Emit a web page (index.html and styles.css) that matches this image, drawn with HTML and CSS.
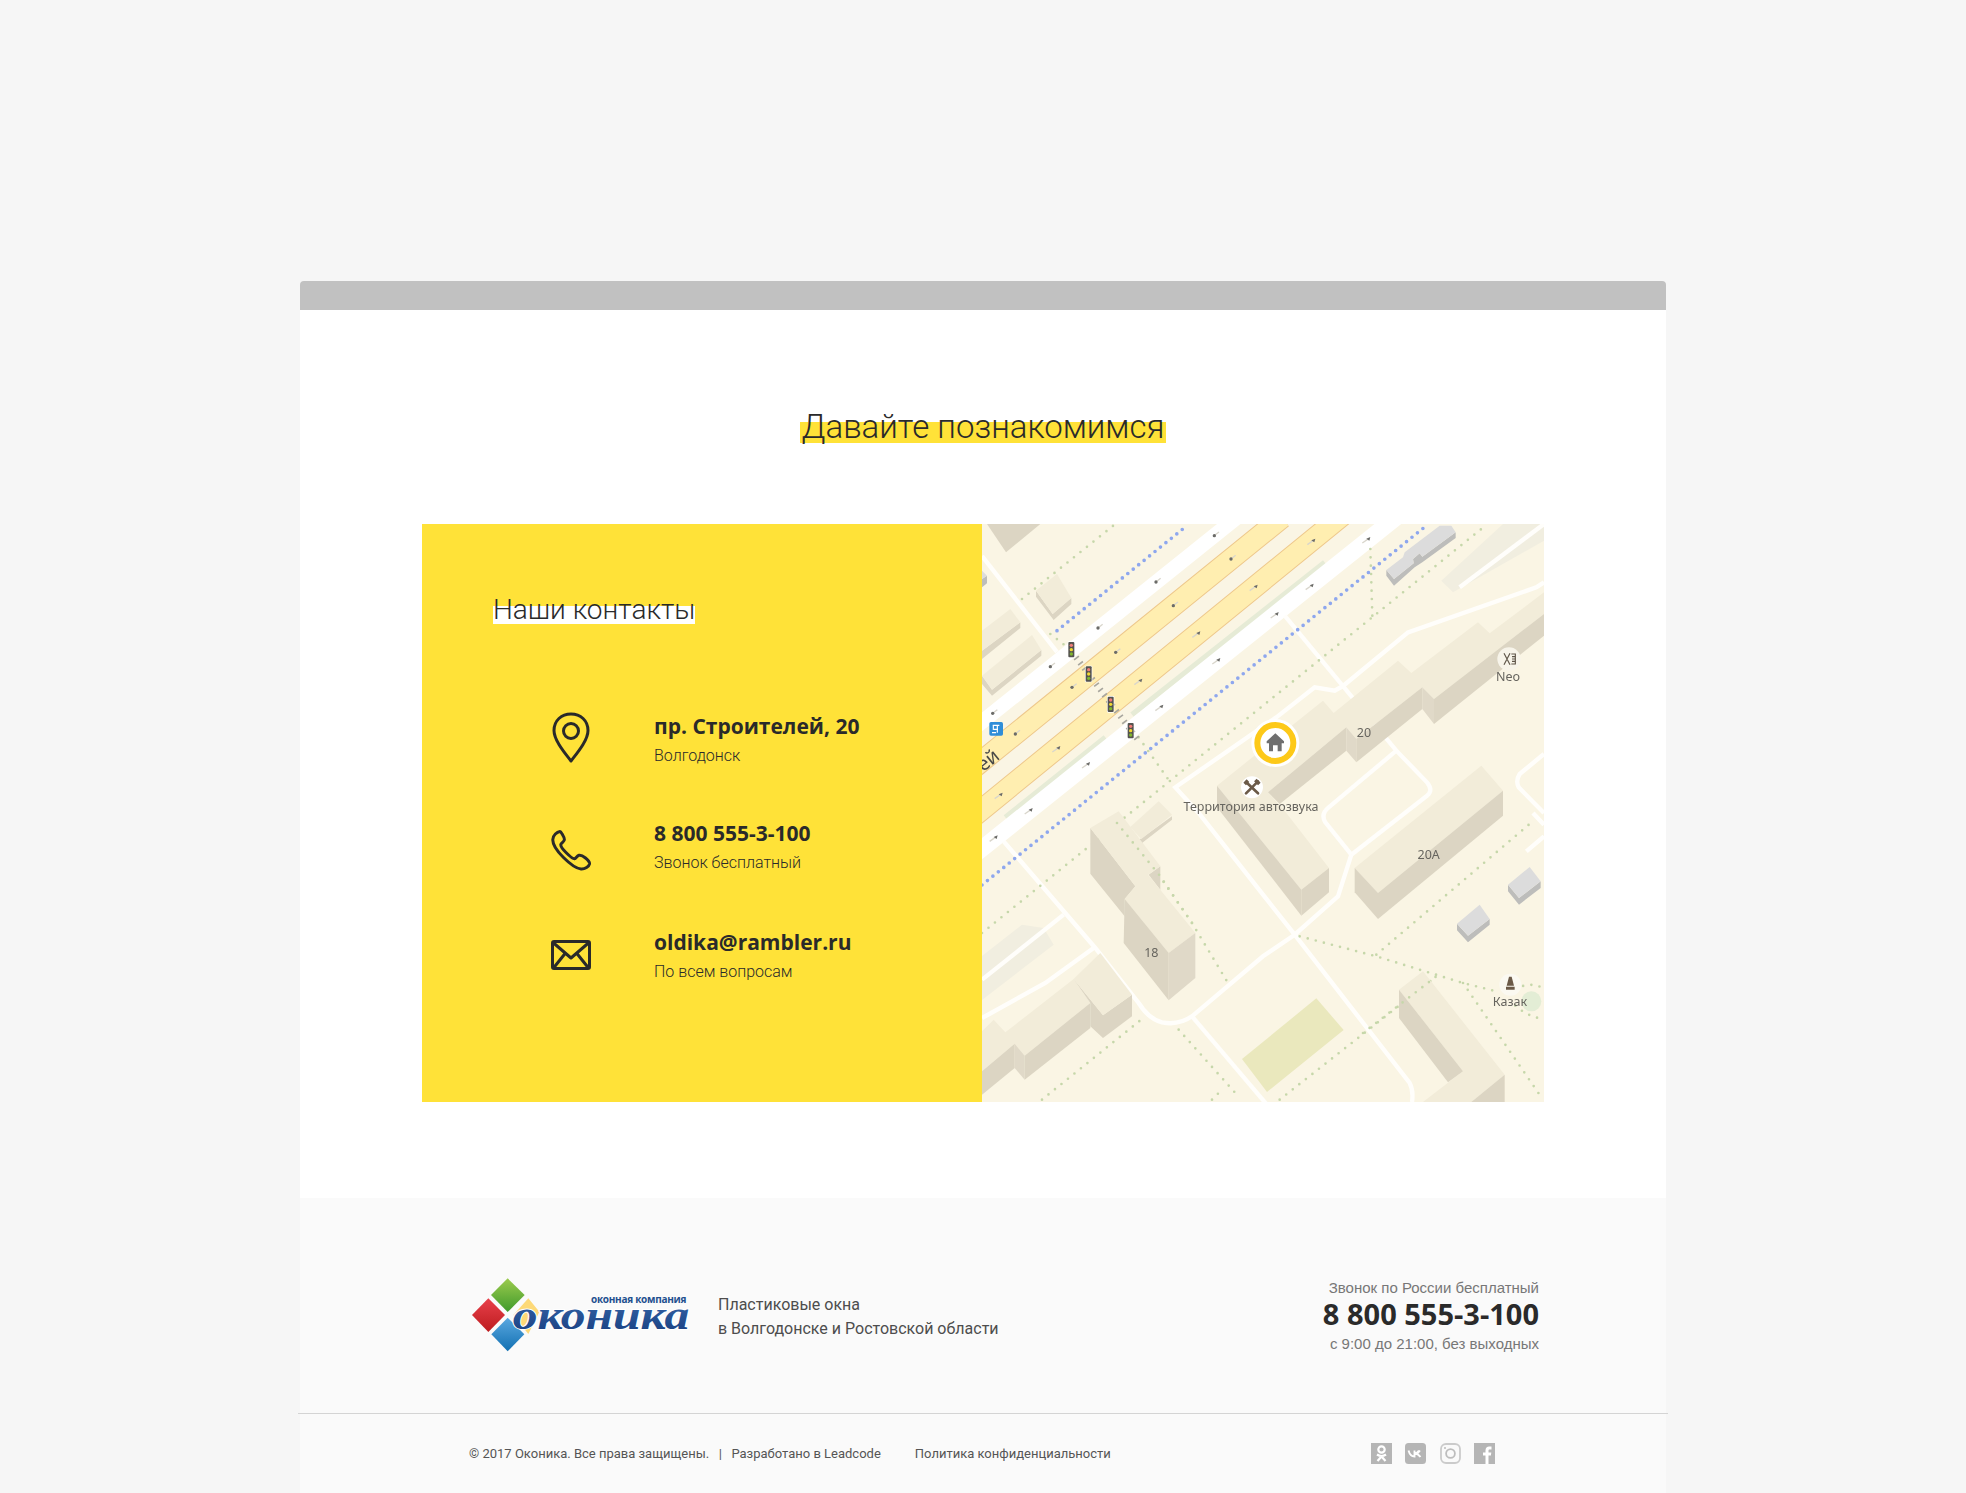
FILE: index.html
```html
<!DOCTYPE html>
<html lang="ru">
  <head>
    <meta charset="UTF-8" />
    <title>Оконика</title>
    <link rel="stylesheet" href="styles.css">
  </head>
  <body>
    <div class="window">
      <div class="window-bar"></div>
      <section class="contacts">
        <h2 class="title"><span>Давайте познакомимся</span></h2>
        <div class="panel">
          <div class="panel-info">
            <h3 class="panel-title"><span>Наши контакты</span></h3>
            <div class="item item-address">
              <div class="item-icon">
                <svg width="40" height="52" viewBox="0 0 40 52"><path class="line" d="M20 49C13 40 3 28 3 18.500C3 8.500 10.500 2 20 2s17 6.500 17 16.500C37 28 27 40 20 49Z"/><circle class="line" cx="20" cy="19" r="7.500"/></svg>
              </div>
              <div>
                <div class="item-name">пр. Строителей, 20</div>
                <div class="item-sub">Волгодонск</div>
              </div>
            </div>
            <div class="item item-phone">
              <div class="item-icon">
                <svg width="40" height="42" viewBox="0 0 40 42"><path class="line" d="M9 2.500C6 3 2 6 1.800 10.500C1.500 16 7 23 12.500 28.500C18 34 24 39.500 30 40C34 40.300 38 37.500 38.500 35C38.800 33 37 31 34.500 29C32 27 30 25.800 28 26.300C26 26.800 25 29.500 23.500 29.800C21.500 30 17.500 26 15 23.500C12.500 21 9.500 17.500 9.800 15.500C10 14 12.800 13 13.300 11C13.800 9 12 6.500 10.800 4.500C10.300 3.500 9.800 2.400 9 2.500Z"/></svg>
              </div>
              <div>
                <div class="item-name">8 800 555-3-100</div>
                <div class="item-sub">Звонок бесплатный</div>
              </div>
            </div>
            <div class="item item-mail">
              <div class="item-icon">
                <svg width="40" height="30" viewBox="0 0 40 30"><rect class="line" x="1.500" y="1.500" width="37" height="27" rx="1.500"/><path class="line" d="M2 2.500L20 18L38 2.500M2.500 28L14.500 13M37.500 28L25.500 13"/></svg>
              </div>
              <div>
                <div class="item-name">oldika@rambler.ru</div>
                <div class="item-sub">По всем вопросам</div>
              </div>
            </div>
          </div>
          <div class="panel-map">
            <svg class="map" width="562" height="578" viewBox="0 0 1686 1734">
              <defs>
                <g id="arr-left"><path d="M-3 2L14 -11" stroke="#d9d6cc" stroke-width="4"/><circle r="5" fill="#6b6b68"/></g>
                <g id="arr-right"><path d="M3 -2L-17 12" stroke="#d9d6cc" stroke-width="4"/><path d="M-5 -1L7 -6L4 5Z" fill="#6b6b68"/></g>
                <g id="light">
                  <rect x="-11" y="-25" width="22" height="50" rx="4" fill="#fff"/>
                  <rect x="-9" y="-23" width="18" height="46" rx="3" fill="#55534f"/>
                  <circle cy="-13" r="5" fill="#ef7d78"/><circle r="5" fill="#f0d832"/><circle cy="13" r="5" fill="#7fb52f"/>
                </g>
              </defs>

              <rect width="1686" height="1734" fill="#faf5e4"/>
              <polygon class="pale" points="1378,170 1413,205 1686,50 1686,0 1563,0"/>
              <polygon class="pale" points="0,1296 120,1202 185,1212 215,1262 0,1428"/>
              <polygon points="780,1605 1003,1423 1085,1518 855,1704" fill="#eae8bd"/>
              <circle cx="1648" cy="1432" r="30" fill="#e3edd5"/>

              <!-- main road -->
              <path class="road-white" stroke-width="44" d="M-100 674L850 -88"/>
              <path class="road-edge" d="M-100 792L900 -19M-100 938L1100 -41"/>
              <path class="road-yellow" d="M-100 792L900 -19M-100 938L1100 -41"/>
              <path class="road-green" d="M70 880L370 640M450 572L1028 115"/>
              <path class="road-white" stroke-width="50" d="M-100 1054L1300 -66"/>

              <!-- yards -->
              <path class="road" d="M0 96L225 384"/>
              <path class="road" d="M908 275L1243 680L1335 775Q1355 800 1335 815L1108 992"/>
              <path class="road" d="M1243 680L1040 850Q1015 870 1030 895L1108 992"/>
              <path class="road" d="M1083 486L1278 325L1663 190L1686 175"/>
              <path class="road" d="M1083 486L1058 500L998 490L883 580L580 790L650 867L843 1112L938 1232L1283 1677Q1295 1700 1290 1734"/>
              <path class="road" d="M1108 992L1068 1117L938 1232L843 1297L630 1477Q590 1505 540 1495Q500 1485 470 1437L340 1272L65 952"/>
              <path class="road" d="M630 1477L870 1760"/>
              <path class="road" d="M245 1172L0 1367"/>
              <path class="road" d="M335 1272L190 1377L0 1482"/>
              <path class="road" d="M1433 190L1686 0"/>
              <path class="road" d="M1686 690L1613 750Q1600 770 1610 790L1686 867"/>
              <path class="road" d="M1633 982L1686 937M1653 867L1686 902"/>

              <!-- paths -->
              <path class="dots-blue" d="M225 320L615 5"/>
              <path class="dots-blue" d="M0 1083L1333 5"/>
              <path class="dots" d="M120 225L400 0M205 330L250 365M0 1227L1509 6M470 640L565 775M1165 75L1171 275"/>
              <path class="dots" d="M405 897L540 1067L630 1197L735 1372M180 1727L490 1477M590 1517L760 1707M690 1727L720 1697"/>
              <path class="dots" d="M953 1237L1183 1297L1443 1377L1543 1402M1183 1292L1658 887M893 1727L1363 1357M1443 1377L1683 1727"/>
              <path class="dots" d="M1600 1395Q1650 1370 1686 1395M1600 1445Q1640 1480 1686 1485"/>

              <!-- top left houses -->
              <polygon class="wall" points="15,0 72,85 175,0"/>
              <polygon class="wall" points="162,200 212,270 268,222 268,240 215,288 162,218"/>
              <polygon class="roof" points="162,200 225,150 268,222 212,270"/>
              <polygon class="wall" points="0,380 115,295 115,312 0,405"/>
              <polygon class="roof" points="0,320 85,255 115,295 0,380"/>
              <polygon class="wall" points="0,455 30,497 178,378 178,395 30,515 0,480"/>
              <polygon class="roof" points="0,455 150,333 178,378 30,497"/>
              <polygon class="gray-wall" points="0,165 15,155 15,178 0,190"/>
              <polygon class="gray" points="0,140 15,155 0,165"/>

              <!-- gray garage -->
              <polygon class="gray-wall" points="1213,138 1236,165 1295,118 1293,105 1313,88 1321,98 1421,25 1421,42 1321,115 1298,130 1236,185 1213,155"/>
              <polygon class="gray" points="1213,138 1263,100 1268,85 1373,5 1408,5 1421,25 1321,98 1313,88 1293,105 1295,118 1236,165"/>

              <!-- house 20 -->
              <polygon class="roof" points="705,785 1023,530 1055,567 1248,410 1288,447 1488,295 1523,328 1686,205 1686,270 1356,525 1321,490 1123,645 1093,610 858,805 913,867 1041,1032 958,1097"/>
              <polygon class="wall" points="858,805 1093,610 1093,680 893,840"/>
              <polygon class="wall-side" points="1093,610 1123,645 1123,715 1093,680"/>
              <polygon class="wall" points="1123,645 1321,490 1321,555 1123,715"/>
              <polygon class="wall-side" points="1321,490 1356,525 1356,600 1321,555"/>
              <polygon class="wall" points="1356,525 1686,270 1686,335 1356,600"/>
              <polygon class="wall" points="705,785 958,1097 958,1175 705,850"/>
              <polygon class="wall" points="958,1097 1041,1032 1041,1105 958,1175"/>

              <!-- house 20A -->
              <polygon class="roof" points="1118,1032 1498,725 1563,800 1188,1107"/>
              <polygon class="wall" points="1118,1032 1188,1107 1188,1185 1118,1105"/>
              <polygon class="wall" points="1188,1107 1563,800 1563,875 1188,1185"/>

              <!-- house 18 -->
              <g transform="translate(0 867)">
                <polygon class="wall" points="480,75 570,10 570,20 480,90 470,80"/>
                <polygon class="roof" points="445,42 530,-35 570,5 478,78"/>
                <polygon class="wall" points="325,45 460,220 428,258 428,310 325,182"/>
                <polygon class="wall" points="500,185 535,160 535,230"/>
                <polygon class="roof" points="325,45 410,-5 535,160 498,185 640,360 560,420 428,258 460,220"/>
                <polygon class="wall" points="428,258 560,420 560,562 425,390"/>
                <polygon class="wall-side" points="560,420 640,360 640,495 560,562"/>
                <path class="dots" d="M405 30L535 190L630 330"/>

                <!-- bottom left house -->
                <polygon class="roof" points="0,655 35,620 70,658 275,498 325,570 128,728 98,692 0,775"/>
                <polygon class="wall" points="0,775 98,692 98,765 0,845"/>
                <polygon class="wall-side" points="98,692 128,728 128,800 98,765"/>
                <polygon class="wall" points="128,728 325,570 325,645 128,800"/>
                <polygon class="wall" points="275,498 363,607 363,675 325,640 325,570"/>
                <polygon class="wall" points="363,607 450,545 450,610 363,675"/>
                <polygon class="roof" points="275,498 355,420 450,545 363,607"/>
              </g>

              <g transform="translate(843 867)">
                <!-- bottom right house -->
                <polygon class="roof" points="408,530 480,475 725,785 625,867 480,867 600,775"/>
                <polygon class="wall" points="408,530 600,775 555,808 408,615"/>
                <polygon class="wall" points="725,785 725,867 625,867"/>
                <path class="dots" d="M300 660L520 490"/>
                <!-- garages -->
                <polygon class="gray-wall" points="582,332 615,368 680,318 680,335 615,388 582,352"/>
                <polygon class="gray" points="582,332 650,275 680,318 615,368"/>
                <polygon class="gray-wall" points="735,215 768,255 833,205 833,225 768,275 735,235"/>
                <polygon class="gray" points="735,215 800,162 833,205 768,255"/>
              </g>

              <!-- lane marks -->
              <use href="#arr-left" x="697" y="35"/><use href="#arr-left" x="522" y="174"/><use href="#arr-left" x="348" y="312"/><use href="#arr-left" x="205" y="428"/><use href="#arr-left" x="32" y="568"/>
              <use href="#arr-left" x="747" y="105"/><use href="#arr-left" x="574" y="245"/><use href="#arr-left" x="401" y="385"/><use href="#arr-left" x="270" y="490"/><use href="#arr-left" x="100" y="630"/>
              <use href="#arr-right" x="820" y="188"/><use href="#arr-right" x="648" y="328"/><use href="#arr-right" x="474" y="470"/><use href="#arr-right" x="228" y="672"/><use href="#arr-right" x="55" y="812"/><use href="#arr-right" x="993" y="50"/>
              <use href="#arr-right" x="708" y="408"/><use href="#arr-right" x="537" y="548"/><use href="#arr-right" x="317" y="720"/><use href="#arr-right" x="145" y="858"/><use href="#arr-right" x="988" y="185"/><use href="#arr-right" x="883" y="270"/><use href="#arr-right" x="40" y="940"/><use href="#arr-right" x="1158" y="45"/>

              <!-- crossing and lights -->
              <path class="zebra" d="M282 400L470 650"/>
              <use href="#light" x="268" y="377"/><use href="#light" x="320" y="450"/><use href="#light" x="386" y="541"/><use href="#light" x="446" y="620"/>

              <rect x="22" y="594" width="41" height="41" rx="5" fill="#2f8dd8"/>
              <path d="M32 604H52M46 604V626M36 616H48M30 626H42M34 604V618" stroke="#fff" stroke-width="3.500" fill="none"/>

              <!-- labels -->
              <text class="road-name" transform="translate(4 745) rotate(-39)">ей</text>
              <text class="label" x="807" y="860">Территория автозвука</text>
              <text class="label" x="1578" y="472">Neo</text>
              <text class="label" x="1146" y="638">20</text>
              <text class="label" x="1340" y="1005">20А</text>
              <text class="label" x="508" y="1299">18</text>
              <text class="label" x="1584" y="1446">Казак</text>

              <!-- places -->
              <circle cx="810" cy="790" r="33" fill="#fff"/>
              <path d="M792 774L828 808M828 772L792 808" stroke="#6b5a48" stroke-width="8" stroke-linecap="round"/>
              <path d="M788 780L798 770M820 768L832 780" stroke="#6b5a48" stroke-width="11" fill="none"/>
              <circle cx="1581" cy="405" r="35" fill="#f7f4ea"/>
              <path d="M1566 388L1584 422M1584 388L1566 422M1588 390H1600V420H1588M1590 398H1600M1590 405H1600M1590 412H1600" stroke="#5e5549" stroke-width="3.500" fill="none"/>
              <circle cx="1585" cy="1382" r="33" fill="#fbf9f1"/>
              <path d="M1581 1358H1589L1596 1385H1574ZM1572 1388H1598V1397H1572Z" fill="#6b5a48"/>

              <circle cx="880" cy="657" r="72" fill="#fff"/>
              <circle cx="880" cy="657" r="54" fill="#fff" stroke="#fdc919" stroke-width="18"/>
              <path d="M880 628L906 652V658H899V682H887V664H873V682H861V658H854V652Z" fill="#6f6f6f"/>
            </svg>
          </div>
        </div>
      </section>

      <footer class="footer">
        <div class="footer-top">
          <div class="logo">
            <svg width="240" height="90" viewBox="0 0 720 270">
              <defs>
                <linearGradient id="logo-text" x1="0" y1="0" x2="0" y2="1"><stop offset="0" stop-color="#3a6cb0"/><stop offset="1" stop-color="#173c7d"/></linearGradient>
                <linearGradient id="logo-green" x1="0" y1="0" x2="0" y2="1"><stop offset="0" stop-color="#9ccb4e"/><stop offset="1" stop-color="#3f9a2b"/></linearGradient>
                <linearGradient id="logo-red" x1="0" y1="0" x2="0" y2="1"><stop offset="0" stop-color="#e8404a"/><stop offset="1" stop-color="#bd1c1f"/></linearGradient>
                <linearGradient id="logo-blue" x1="0" y1="0" x2="0" y2="1"><stop offset="0" stop-color="#5aa8e0"/><stop offset="1" stop-color="#1270b2"/></linearGradient>
              </defs>
              <polygon points="143,25 194,75 143,126 93,75" fill="url(#logo-green)"/>
              <polygon points="85,85 135,135 85,186 36,135" fill="url(#logo-red)"/>
              <polygon points="143,143 193,193 143,244 94,193" fill="url(#logo-blue)"/>
              <polygon points="205,85 238,125 205,192 160,135" fill="#fdd978"/>
              <text class="logo-small" x="393" y="100" textLength="286">оконная компания</text>
              <text class="logo-name" x="158" y="178" textLength="530" lengthAdjust="spacingAndGlyphs" fill="url(#logo-text)">оконика</text>
            </svg>
          </div>
          <div class="footer-about">Пластиковые окна<br />в Волгодонске и Ростовской области</div>
          <div class="footer-call">
            <div class="footer-note">Звонок по России бесплатный</div>
            <div class="footer-phone">8 800 555-3-100</div>
            <div class="footer-note">с 9:00 до 21:00, без выходных</div>
          </div>
        </div>
        <div class="footer-bottom">
          <span class="copy">© 2017 Оконика. Все права защищены.</span>
          <span class="sep">|</span>
          <span class="dev">Разработано в Leadcode</span>
          <span class="policy">Политика конфиденциальности</span>
          <div class="socials">
            <svg width="21" height="21" viewBox="0 0 21 21"><rect width="21" height="21" fill="#b5b5b5"/><circle cx="10.500" cy="6.500" r="3.200" fill="none" stroke="#fff" stroke-width="2.200"/><path d="M6 11.500C9 13.500 12 13.500 15 11.500M10.500 13.500L6.500 18M10.500 13.500L14.500 18" fill="none" stroke="#fff" stroke-width="2.200"/></svg>
            <svg width="21" height="21" viewBox="0 0 21 21"><rect width="21" height="21" rx="3.500" fill="#b5b5b5"/><path d="M3.500 7.500C4.500 11 6.500 13.500 9.500 13.500V7.500M9.500 10.500C11.500 10.500 13 9.500 14 7.500M9.500 10.500C12 10.500 14 12 15.500 14M15 7.500L12.500 10.500" fill="none" stroke="#fff" stroke-width="1.900"/></svg>
            <svg width="21" height="21" viewBox="0 0 21 21"><rect x="1" y="1" width="19" height="19" rx="5" fill="none" stroke="#cbcbcb" stroke-width="1.800"/><circle cx="10.500" cy="10.500" r="4.400" fill="none" stroke="#bdbdbd" stroke-width="1.800"/><circle cx="5" cy="5" r="1" fill="#bdbdbd"/></svg>
            <svg width="21" height="21" viewBox="0 0 21 21"><rect width="21" height="21" fill="#b5b5b5"/><path d="M11.500 21V12.500H9V9.500H11.500V7.500C11.500 5 13 3.500 15.200 3.500H17.500V6.500H15.800C14.800 6.500 14.500 7 14.500 7.800V9.500H17.300L16.900 12.500H14.500V21Z" fill="#fff"/></svg>
          </div>
        </div>
      </footer>
    </div>
  </body>
</html>
```

FILE: styles.css
```css
body {
  margin: 0;
  background-color: #f6f6f6;
  font-family: Roboto, "Liberation Sans", sans-serif;
  color: #2a2a2a;
}
.window {
  width: 1366px;
  margin: 281px 0 0 300px;
}
.window-bar {
  height: 29px;
  background-color: #c1c1c1;
  border-radius: 4px 4px 0 0;
}
.contacts {
  height: 888px;
  padding-top: 99px;
  box-sizing: border-box;
  background-color: #fff;
}
.title {
  margin: 0 0 80px;
  height: 35px;
  text-align: center;
  font-size: 33px;
  font-weight: 300;
  line-height: 35px;
}
.title span {
  padding: 0 2px;
  background: linear-gradient(#ffe238, #ffe238) 0 15px / 100% 21px no-repeat;
}
.panel {
  display: flex;
  width: 1122px;
  height: 578px;
  margin-left: 122px;
}
.panel-info {
  width: 560px;
  padding: 68px 0 0 71px;
  box-sizing: border-box;
  background-color: #ffe238;
}
.panel-title {
  margin: 0 0 84px;
  font-size: 28px;
  font-weight: 300;
  line-height: 36px;
}
.panel-title span {
  background: linear-gradient(#fff, #fff) 0 13px / 100% 18px no-repeat;
}
.item {
  display: flex;
  align-items: flex-start;
  gap: 63px;
  padding-left: 58px;
}
.item-icon {
  width: 40px;
  flex: none;
}
.item-phone {
  margin-top: 50px;
}
.item-phone .item-icon {
  margin-top: 10px;
}
.item-mail {
  margin-top: 52px;
}
.item-mail .item-icon {
  margin-top: 12px;
}
.item-name {
  font-family: "Open Sans", sans-serif;
  font-size: 21px;
  font-weight: 700;
  line-height: 28px;
}
.item-sub {
  margin-top: 3px;
  font-size: 16px;
  font-weight: 300;
  line-height: 26px;
}
.line {
  fill: none;
  stroke: #2a2a2a;
  stroke-width: 3;
  stroke-linejoin: round;
}
.panel-map {
  width: 562px;
  overflow: hidden;
}
.map {
  display: block;
  filter: blur(0.5px);
}
.map .pale { fill: #f1eee0; }
.map .roof { fill: #f2ecd9; }
.map .wall { fill: #dcd5c3; }
.map .wall-side { fill: #e0d9c8; }
.map .gray { fill: #dcdcdc; }
.map .gray-wall { fill: #bdbdbb; }
.road-white { stroke: #fff; fill: none; }
.road-edge { stroke: #eec88c; stroke-width: 66; fill: none; }
.road-yellow { stroke: #ffeeb0; stroke-width: 60; fill: none; }
.road-green { stroke: #e6ebd6; stroke-width: 16; fill: none; }
.road { stroke: #fffefb; stroke-width: 13; fill: none; }
.dots-blue {
  fill: none;
  stroke: #8ea7ee;
  stroke-width: 11;
  stroke-linecap: round;
  stroke-dasharray: 0 21;
}
.dots {
  fill: none;
  stroke: #c6d7aa;
  stroke-width: 8;
  stroke-linecap: round;
  stroke-dasharray: 0 25;
}
.zebra {
  fill: none;
  stroke: #a9a79f;
  stroke-width: 18;
  stroke-dasharray: 5 15;
}
.label {
  font-family: "Noto Sans", sans-serif;
  font-size: 37.500px;
  fill: #66645e;
  text-anchor: middle;
}
.road-name {
  font-family: "Noto Sans", sans-serif;
  font-size: 58px;
  fill: #4a4a48;
}
.footer {
  height: 295px;
  background-color: #fafafa;
}
.footer-top {
  display: flex;
  height: 215px;
  box-sizing: border-box;
  padding: 72px 127px 0 160px;
}
.logo {
  width: 240px;
  margin-right: 18px;
}
.logo svg {
  display: block;
}
.logo-small {
  font-family: "Open Sans", sans-serif;
  font-size: 30px;
  font-weight: 700;
  fill: #23508f;
}
.logo-name {
  font-family: "Liberation Serif", serif;
  font-size: 128px;
  font-weight: 700;
  font-style: italic;
  stroke: #fff;
  stroke-width: 6px;
  paint-order: stroke;
}
.footer-about {
  padding-top: 23px;
  font-size: 16px;
  line-height: 24px;
  color: #4d4d4d;
}
.footer-call {
  margin-top: 8px;
  margin-left: auto;
  text-align: right;
}
.footer-note {
  font-family: "Liberation Sans", sans-serif;
  font-size: 15px;
  line-height: 20px;
  color: #777;
}
.footer-phone {
  padding-bottom: 5px;
  font-family: "Open Sans", sans-serif;
  font-size: 29px;
  font-weight: 700;
  line-height: 31px;
}
.footer-bottom {
  display: flex;
  align-items: center;
  height: 78px;
  margin: 0 -2px;
  padding-left: 171px;
  border-top: 1px solid #d4d4d4;
  font-size: 13px;
  color: #555;
}
.sep {
  margin: 0 9.500px;
}
.policy {
  margin-left: 34px;
}
.socials {
  display: flex;
  gap: 13.500px;
  margin-left: auto;
  margin-right: 173px;
}
```
